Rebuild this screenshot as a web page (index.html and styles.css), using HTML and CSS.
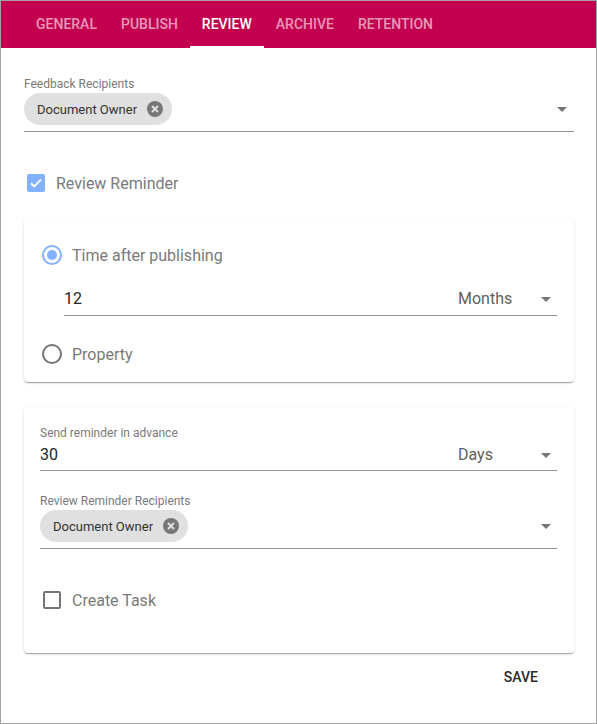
FILE: index.html
```html
<!DOCTYPE html>
<html>
<head>
<meta charset="utf-8">
<link rel="stylesheet" href="styles.css">
</head>
<body>
<div class="frame">
  <nav class="tabs">
    <div class="tab">General</div>
    <div class="tab">Publish</div>
    <div class="tab active">Review</div>
    <div class="tab">Archive</div>
    <div class="tab">Retention</div>
  </nav>
  <main class="content">
    <div class="field chips-field first">
      <div class="label">Feedback Recipients</div>
      <div class="chip-row">
        <span class="chip">Document Owner<span class="chip-x"><svg width="18" height="18" viewBox="0 0 18 18"><circle cx="9" cy="9" r="8" fill="#777"/><path d="M6 6l6 6M12 6l-6 6" stroke="#e0e0e0" stroke-width="2"/></svg></span></span>
        <span class="arrow arrow-far"></span>
      </div>
    </div>

    <label class="check-row top-check">
      <span class="checkbox checked"><svg width="14" height="14" viewBox="0 0 14 14"><path d="M2 7.2l3.2 3.2L12 3.6" fill="none" stroke="#fff" stroke-width="2"/></svg></span>
      <span class="check-text">Review Reminder</span>
    </label>

    <section class="card card-one">
      <div class="radio-row">
        <span class="radio on"><span class="dot"></span></span>
        <span class="radio-text">Time after publishing</span>
      </div>
      <div class="value-row indented">
        <span class="value">12</span>
        <span class="select">Months<span class="arrow"></span></span>
      </div>
      <div class="radio-row second">
        <span class="radio"></span>
        <span class="radio-text">Property</span>
      </div>
    </section>

    <section class="card card-two">
      <div class="label">Send reminder in advance</div>
      <div class="value-row tight">
        <span class="value">30</span>
        <span class="select">Days<span class="arrow"></span></span>
      </div>
      <div class="field chips-field inner">
        <div class="label">Review Reminder Recipients</div>
        <div class="chip-row">
          <span class="chip">Document Owner<span class="chip-x"><svg width="18" height="18" viewBox="0 0 18 18"><circle cx="9" cy="9" r="8" fill="#777"/><path d="M6 6l6 6M12 6l-6 6" stroke="#e0e0e0" stroke-width="2"/></svg></span></span>
          <span class="arrow arrow-near"></span>
        </div>
      </div>
      <label class="check-row task-check">
        <span class="checkbox"></span>
        <span class="check-text">Create Task</span>
      </label>
    </section>

    <div class="actions">
      <button class="save">Save</button>
    </div>
  </main>
</div>
</body>
</html>
```

FILE: styles.css
```css
* { box-sizing: border-box; }
html, body { margin: 0; padding: 0; background: #fff; }
body { font-family: Roboto, "Noto Sans", Arial, sans-serif; }

.frame {
  width: 597px;
  height: 724px;
  border: 1px solid #a3a3a3;
  overflow: hidden;
}

.tabs {
  display: flex;
  height: 47px;
  background: #c3004f;
  padding-left: 23px;
}
.tab {
  position: relative;
  padding: 0 12px;
  line-height: 46px;
  font-size: 14px;
  font-weight: 500;
  text-transform: uppercase;
  color: rgba(255,255,255,0.6);
  letter-spacing: 0;
}
.tab.active { color: #fff; }
.tab.active::after {
  content: "";
  position: absolute;
  left: 0; right: 0; bottom: 0;
  height: 2px;
  background: #fff;
}

.content { padding: 0 22px 0 23px; }

.label {
  font-size: 12px;
  line-height: 14px;
  color: #7a7a7a;
}

.chips-field.first { margin-top: 29px; }
.chip-row {
  display: flex;
  align-items: center;
  justify-content: space-between;
  margin-top: 2px;
  padding-bottom: 6px;
  border-bottom: 1px solid #949494;
}
.chip {
  display: inline-flex;
  align-items: center;
  height: 32px;
  padding: 0 8px 0 13px;
  border-radius: 16px;
  background: #e0e0e0;
  font-size: 13px;
  color: #333;
}
.chip-x { display: flex; margin-left: 9px; }

.arrow {
  width: 0; height: 0;
  border-left: 5px solid transparent;
  border-right: 5px solid transparent;
  border-top: 5px solid #757575;
}
.arrow-far { margin-right: 7px; }
.arrow-near { margin-right: 6px; }

.check-row {
  display: flex;
  align-items: center;
  height: 24px;
}
.top-check { margin-top: 39px; padding-left: 3px; }
.checkbox {
  width: 18px; height: 18px;
  border: 2px solid #757575;
  border-radius: 2px;
  display: flex; align-items: center; justify-content: center;
}
.checkbox.checked { background: #82b1ff; border-color: #82b1ff; }
.check-text {
  margin-left: 11px;
  font-size: 16px;
  color: #7a7a7a;
}

.card {
  background: #fff;
  border-radius: 4px;
  box-shadow: 0 2px 1px -1px rgba(0,0,0,.2), 0 1px 1px 0 rgba(0,0,0,.14), 0 1px 3px 0 rgba(0,0,0,.12);
  padding: 0 17px 0 16px;
}
.card-one { margin-top: 24px; padding-top: 24px; padding-bottom: 16px; }

.radio-row { display: flex; align-items: center; height: 24px; }
.radio-row.second { margin-top: 26px; }
.radio {
  width: 20px; height: 20px;
  margin: 0 2px;
  border: 2px solid #757575;
  border-radius: 50%;
  display: flex; align-items: center; justify-content: center;
}
.radio.on { border-color: #82b1ff; }
.radio .dot { width: 10px; height: 10px; border-radius: 50%; background: #82b1ff; }
.radio-text { margin-left: 8px; font-size: 16px; color: #7a7a7a; }

.value-row {
  display: flex;
  align-items: center;
  padding-bottom: 6px;
  border-bottom: 1px solid #949494;
  font-size: 16px;
  line-height: 20px;
}
.value-row.indented { margin-left: 24px; margin-top: 22px; }
.value-row.tight { margin-top: 5px; padding-bottom: 5px; }
.value { flex: 1; color: #262626; }
.select {
  width: 99px;
  display: flex;
  align-items: center;
  justify-content: space-between;
  padding-right: 6px;
  color: #5f5f5f;
}

.card-two { margin-top: 25px; padding-top: 19px; padding-bottom: 41px; }
.chips-field.inner { margin-top: 23px; }
.task-check { margin-top: 39px; padding-left: 3px; }
.task-check .check-text { margin-left: 11px; }

.actions { display: flex; justify-content: flex-end; margin-top: 6px; }
.save {
  height: 36px;
  padding: 0 16px;
  margin-right: 20px;
  border: 0;
  background: transparent;
  font-family: Roboto, Arial, sans-serif;
  font-size: 14px;
  font-weight: 500;
  text-transform: uppercase;
  color: #2a2a2a;
}
```
